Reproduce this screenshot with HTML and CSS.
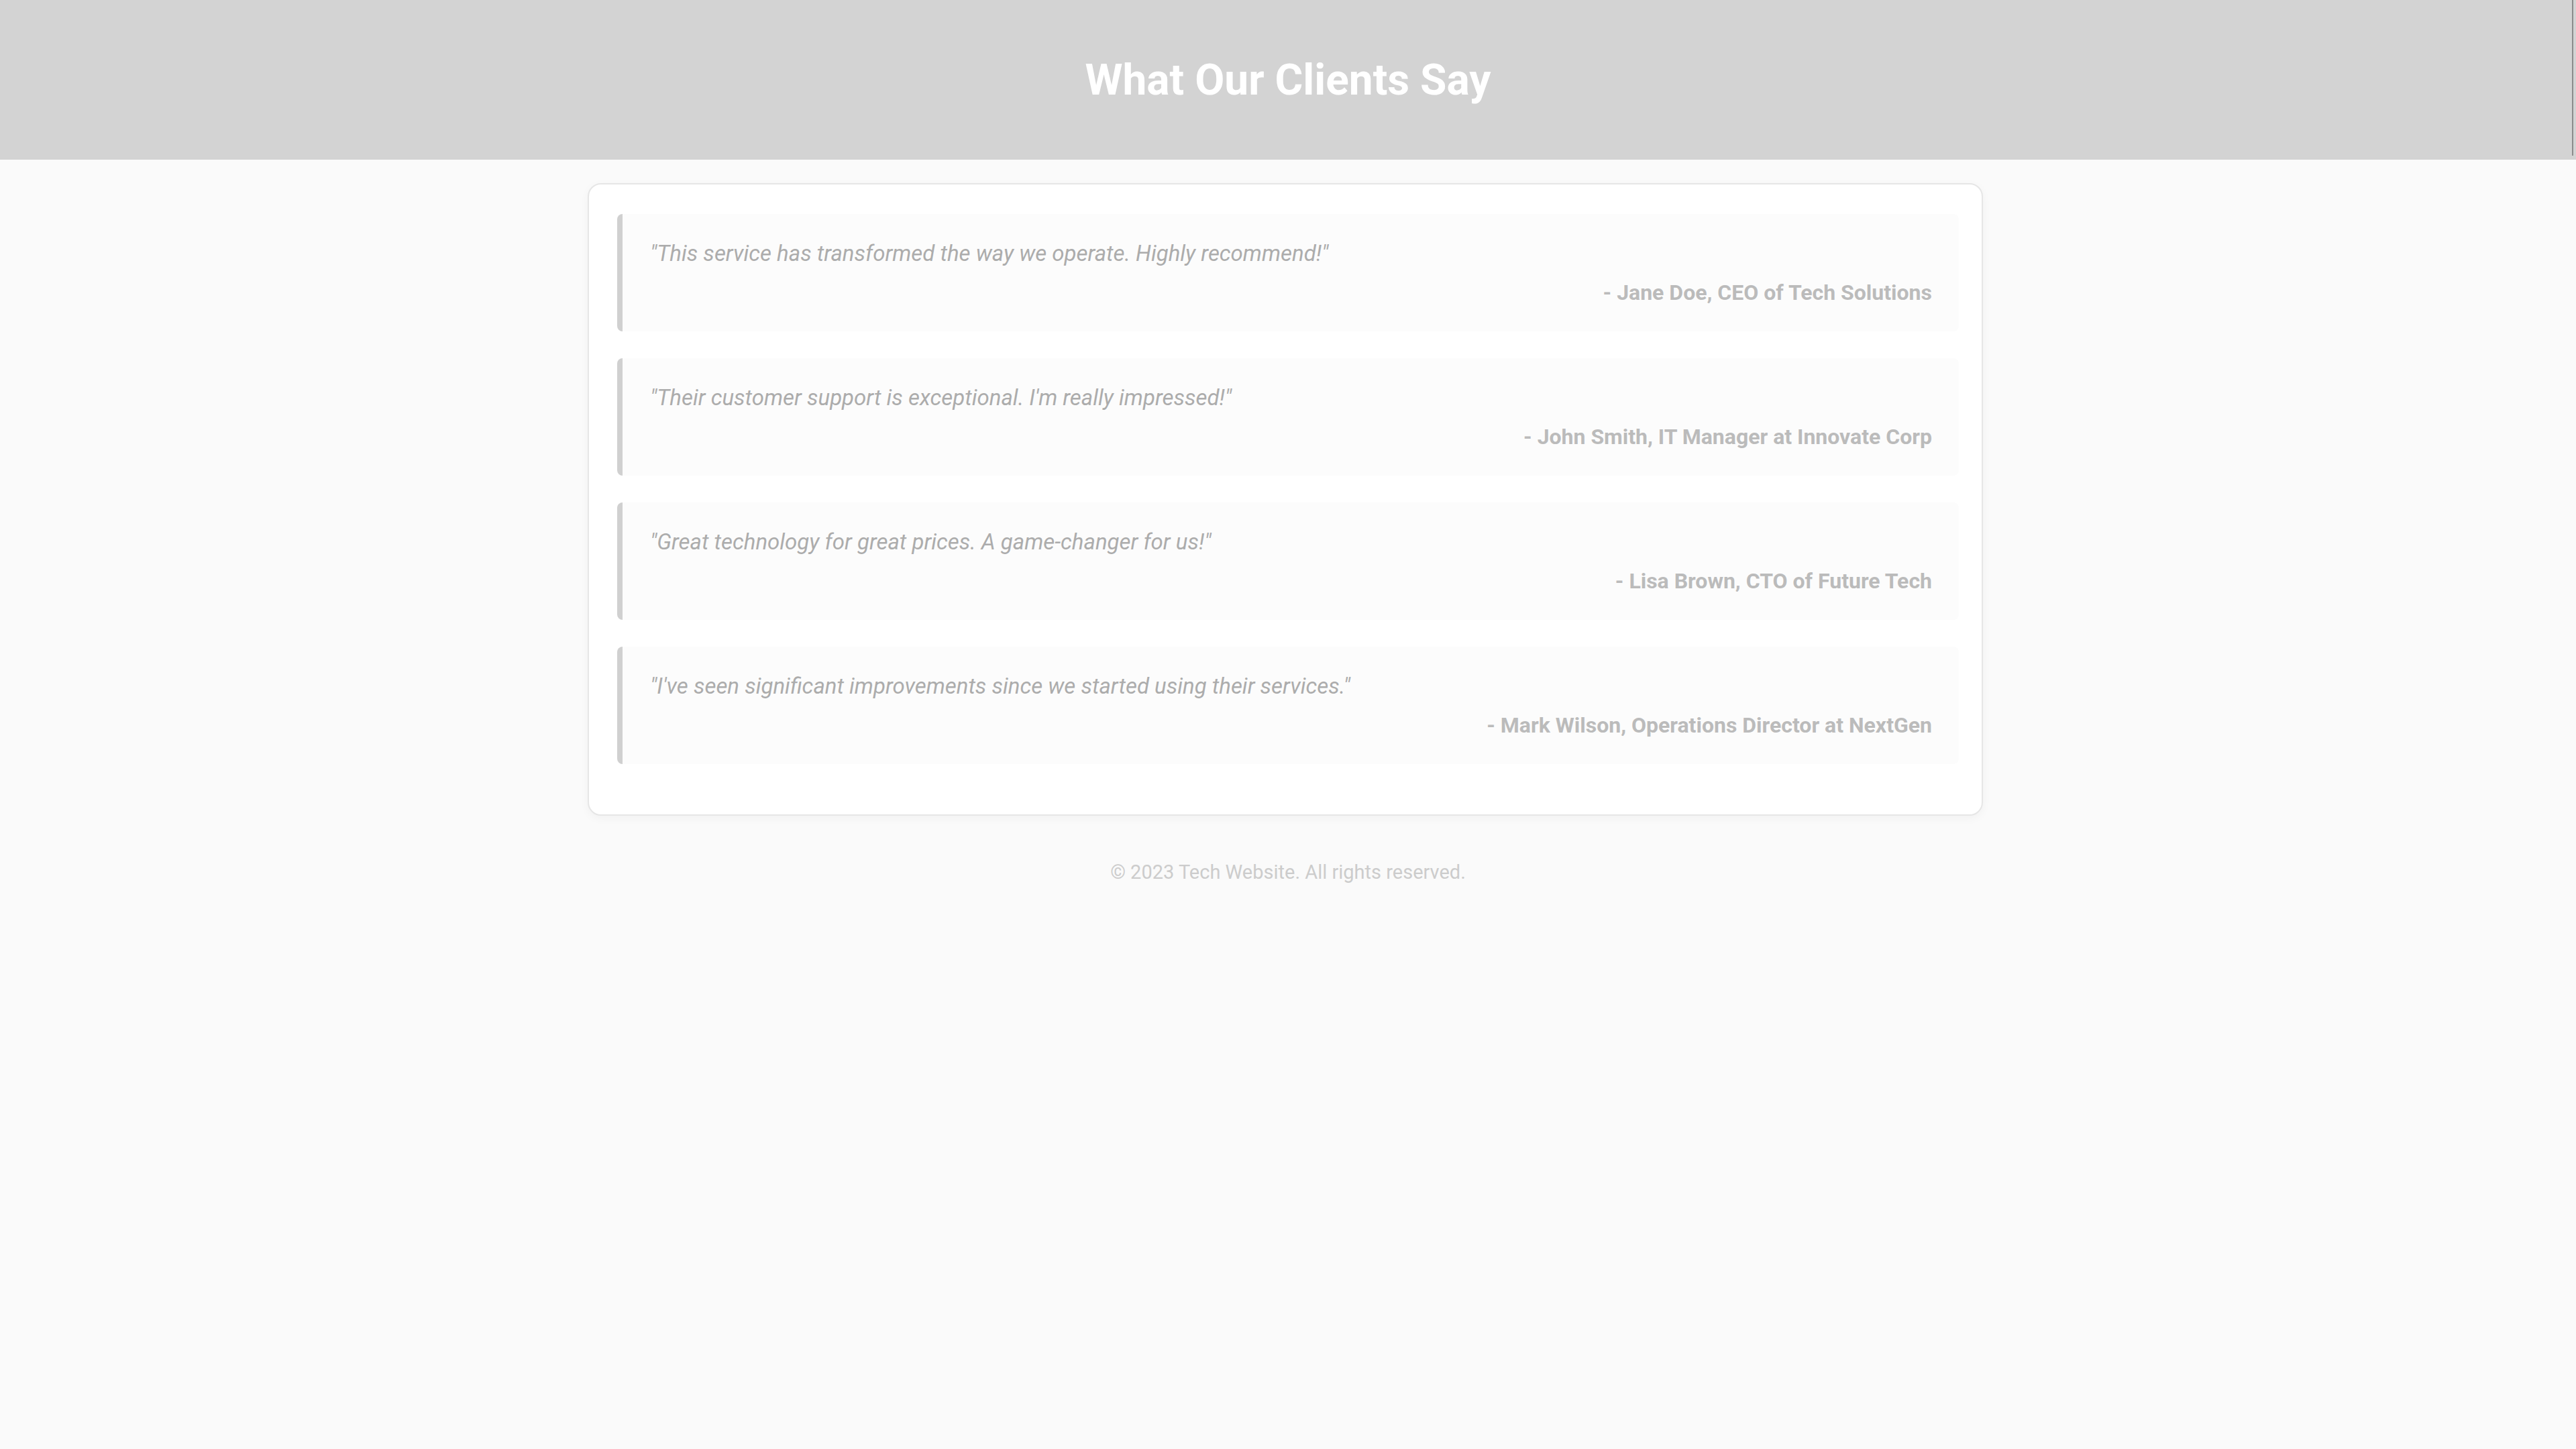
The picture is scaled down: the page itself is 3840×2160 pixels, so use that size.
FILE: index.html
```html
<!DOCTYPE html>
<html lang="en">
<head>
<meta charset="utf-8">
<title>What Our Clients Say</title>
<link rel="stylesheet" href="styles.css">
</head>
<body>
<header class="site-header">
  <h1 class="site-title">What Our Clients Say</h1>
</header>
<main class="testimonials">
  <div class="testimonial">
    <p class="quote">"This service has transformed the way we operate. Highly recommend!"</p>
    <p class="author">- Jane Doe, CEO of Tech Solutions</p>
  </div>
  <div class="testimonial">
    <p class="quote">"Their customer support is exceptional. I'm really impressed!"</p>
    <p class="author">- John Smith, IT Manager at Innovate Corp</p>
  </div>
  <div class="testimonial">
    <p class="quote">"Great technology for great prices. A game-changer for us!"</p>
    <p class="author">- Lisa Brown, CTO of Future Tech</p>
  </div>
  <div class="testimonial">
    <p class="quote">"I've seen significant improvements since we started using their services."</p>
    <p class="author">- Mark Wilson, Operations Director at NextGen</p>
  </div>
</main>
<footer class="site-footer">
  <p>&copy; 2023 Tech Website. All rights reserved.</p>
</footer>
</body>
</html>
```

FILE: styles.css
```css
html, body {
  margin: 0;
  padding: 0;
}
body {
  background: #fafafa;
  font-family: Roboto, "Liberation Sans", Arial, sans-serif;
  color: #aaaaaa;
}
.site-header {
  position: relative;
  height: 238px;
  background: #d3d3d3;
  display: flex;
  align-items: center;
  justify-content: center;
}
.site-header::after {
  content: "";
  position: absolute;
  top: 0;
  right: 4px;
  width: 2px;
  height: 232px;
  background: #8c8c8c;
}
.site-title {
  margin: 0;
  font-size: 64px;
  font-weight: 700;
  color: #ffffff;
  line-height: normal;
}
.testimonials {
  box-sizing: border-box;
  width: 2080px;
  margin: 35px calc(50% - 1036px) 0 calc(50% - 1044px);
  padding: 44px 34px 35px 42px;
  background: #ffffff;
  border: 2px solid #e6e6e6;
  border-radius: 20px;
  box-shadow: 0 4px 14px rgba(0, 0, 0, 0.04);
}
.testimonial {
  background: #fcfcfc;
  border-left: 8px solid #d0d0d0;
  border-radius: 8px;
  padding: 39px 40px 39px 41px;
  margin-bottom: 40px;
}
.quote {
  margin: 0 0 20px;
  font-size: 33px;
  font-style: italic;
  color: #acacac;
  line-height: normal;
}
.author {
  margin: 0;
  font-size: 32px;
  font-weight: 700;
  text-align: right;
  color: #bbbbbb;
  line-height: normal;
}
.site-footer {
  text-align: center;
  padding-top: 67px;
}
.site-footer p {
  margin: 0;
  font-size: 29px;
  color: #cccccc;
  line-height: normal;
}
```
